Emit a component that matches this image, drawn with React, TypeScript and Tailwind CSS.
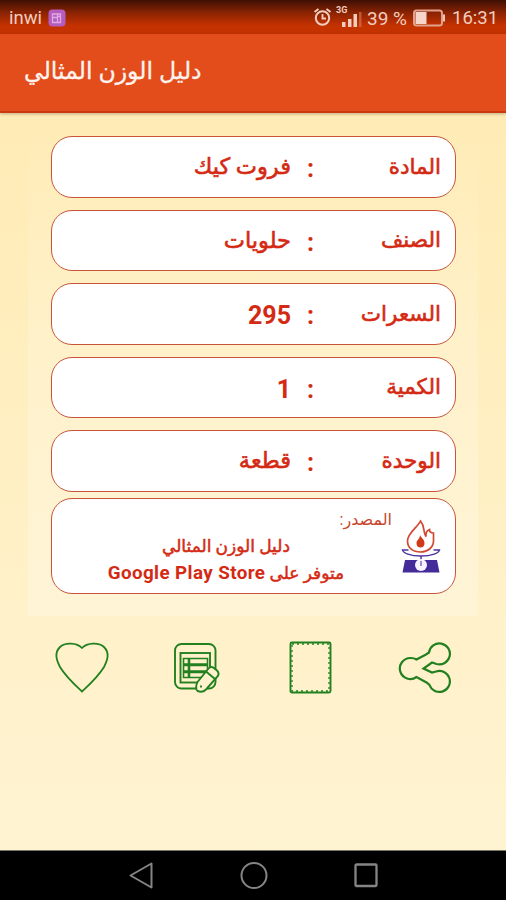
import type { ReactNode } from 'react'

type Row = { label: string; value: string; size: string }

const arabic = 'text-[22.5px] [-webkit-text-stroke:0.6px_#d42a14]'
const digits = 'text-[25px] pt-1 font-bold'

const rows: Row[] = [
  { label: 'المادة', value: 'فروت كيك', size: arabic },
  { label: 'الصنف', value: 'حلويات', size: arabic },
  { label: 'السعرات', value: '295', size: digits },
  { label: 'الكمية', value: '1', size: digits },
  { label: 'الوحدة', value: 'قطعة', size: arabic },
]

function StatusBar() {
  return (
    <div
      dir="ltr"
      className="flex h-[34px] items-center bg-linear-to-b from-[#3f1003] via-[#8f2402] via-40% to-[#c43200] to-75% pt-[3px] pr-[9px] pl-[9px] text-[18.5px] leading-none text-[#f3cdbf]"
    >
      <span className="w-[33px]">inwi</span>
      <svg width="18" height="18" viewBox="0 0 18 18" className="ml-[6px] -mt-0.5">
        <rect x="0.5" y="0.5" width="17" height="17" rx="4" fill="#b45cc0" />
        <path
          d="M4.5 5h8v8.500h-8zM4.500 8.500h5v5M9.500 5v2.500h3"
          fill="none"
          stroke="#e0a9df"
          strokeWidth="1.300"
        />
      </svg>
      <div className="flex-1" />
      <svg width="19" height="20" viewBox="0 0 19 20" fill="none" stroke="#f3cdbf" className="-mt-[3px]">
        <circle cx="9.500" cy="11" r="6.700" strokeWidth="2" />
        <path d="M9.500 7v4.500h3.500M1.500 5l4-3M17.500 5l-4-3" strokeWidth="1.900" />
      </svg>
      <div className="mr-[2px] ml-[4px] -mt-[2px] flex h-[24px] w-[29px] flex-col">
        <span className="h-[6px] text-[9px] leading-[8px] font-bold">3G</span>
        <svg width="29" height="17" viewBox="0 0 29 17" fill="#f3cdbf">
          <rect x="6" y="10" width="3.500" height="5" />
          <rect x="12" y="7" width="3.500" height="8" />
          <rect x="17.500" y="2" width="3.500" height="13" />
          <rect x="23" y="0" width="2.500" height="15" fill="#dd7a58" opacity="0.600" />
        </svg>
      </div>
      <span className="w-[42px] text-[19px] whitespace-nowrap">39 %</span>
      <svg width="34" height="18" viewBox="0 0 34 18" className="ml-[3px] -mt-px">
        <rect x="2" y="1.500" width="28" height="15" rx="2.500" fill="none" stroke="#dfa28c" strokeWidth="2" />
        <rect x="3.500" y="3" width="11" height="12" fill="#f6d5ca" />
        <rect x="31" y="5.500" width="2" height="7" fill="#f0c5b6" />
      </svg>
      <span className="ml-[6px] w-[45px] whitespace-nowrap">16:31</span>
    </div>
  )
}

function Card({ children, className }: { children: ReactNode; className: string }) {
  return (
    <div className={`flex rounded-[21px] border border-[#c8553a] bg-white text-[#d42a14] ${className}`}>
      {children}
    </div>
  )
}

function FlameScale() {
  return (
    <svg width="40" height="54" viewBox="0 0 40 54" fill="none">
      <path
        d="M19.500 2C17 8 6.500 14 6.500 22C6.500 29 12 33 19.500 33C27 33 32.500 28 32.500 22V14C30 14 28.500 12.500 28.500 10.500C26 11.500 24.500 13.500 25 17.500C21.500 12.500 24.500 8 19.500 2Z"
        stroke="#cf4a30"
        strokeWidth="1.700"
      />
      <path d="M19 16C20 19 23.500 20 23.500 24C23.500 27 22 28.500 19.500 28.500C17 28.500 15.500 27 15.500 24C15.500 21 19 20 19 16Z" fill="#d13a17" />
      <path d="M7.500 31H1.500C2 34 9 37 20 37S38 34 38.500 31H32.500M20 37v5" stroke="#4b35a0" strokeWidth="1.500" />
      <path d="M4 41h32l2.500 12.500h-37z" fill="#452b99" />
      <circle cx="20" cy="46" r="6" fill="#f7f3ff" />
      <path d="M20 42v5" stroke="#452b99" />
    </svg>
  )
}

function Actions() {
  return (
    <div dir="ltr" className="flex h-[54px] items-center justify-between pr-[54px] pl-[54px]">
      <svg width="56" height="54" viewBox="0 0 56 54" fill="none" stroke="#238021" strokeWidth="1.800">
        <path d="M28 8C23 2.500 11 2 6 7C0 13 2.500 20 6 27C12 37 21 45 28 51.500C35 45 44 37 50 27C53.500 20 56 13 50 7C45 2 33 2.500 28 8Z" />
      </svg>
      <svg width="48" height="54" viewBox="0 0 48 54" fill="none" stroke="#238021" strokeWidth="1.900" className="mr-[3px] -ml-[3px]">
        <rect x="3" y="4" width="40.500" height="44.500" rx="6.500" />
        <rect x="8.500" y="13" width="29.500" height="29.500" />
        <path
          d="M17.500 18.500h18v5.500h-18zM17.500 25.500h18v5.500h-18zM17.500 32.500h15v5h-15zM11.500 18.500h5v5.500h-5zM11.500 25.500h5v5.500h-5zM11.500 32.500h5v5h-5z"
          strokeWidth="1.600"
        />
        <path
          d="M25.500 42L36.500 28.500C38 26.500 40.500 26.500 42.500 28.500L45 30.500C47 32.500 47 34.500 45.500 36.500L34 49.500C31.500 52 28 52 25.500 51C23.500 50 24 44.500 25.500 42Z"
          fill="#fff2cc"
        />
        <path d="M34 31.500l9 7.500M29 45.500v2" />
      </svg>
      <svg width="44" height="54" viewBox="0 0 44 54" fill="none" stroke="#238021">
        <rect x="1.500" y="2.500" width="40" height="50" rx="1.500" strokeWidth="1.900" />
        <rect x="3" y="4" width="37" height="47" strokeWidth="1.300" strokeDasharray="2 3" />
      </svg>
      <svg width="54" height="54" viewBox="0 0 54 54" fill="none" stroke="#238021" strokeWidth="2.200">
        <path d="M18.500 19.500L28 14.500L31 12.500A10.500 10.500 0 1 1 38.500 24L34 22.500L25.500 28.500L34 32.500L38 31.500A10.500 10.500 0 1 1 31.500 45L28.500 42.500L18.500 37A10.500 10.500 0 1 1 12.500 18A10.500 10.500 0 0 1 18.500 19.500Z" />
      </svg>
    </div>
  )
}

function NavBar() {
  return (
    <div dir="ltr" className="flex h-[50px] items-center justify-between border-t border-[#77766b] bg-black pr-[127px] pl-[128px]">
      <svg width="27" height="28" viewBox="0 0 27 28" fill="none" stroke="#858585" strokeWidth="2">
        <path d="M2.500 13.500L23.500 1.500V25.500Z" strokeLinejoin="round" />
      </svg>
      <svg width="28" height="28" viewBox="0 0 28 28" fill="none" stroke="#858585" strokeWidth="2">
        <circle cx="14" cy="13.500" r="12.500" />
      </svg>
      <svg width="26" height="28" viewBox="0 0 26 28" fill="none" stroke="#858585" strokeWidth="2.300">
        <rect x="2.500" y="2.500" width="21" height="21.500" rx="1" />
      </svg>
    </div>
  )
}

export default function App() {
  return (
    <div
      dir="rtl"
      className="flex h-[900px] w-[506px] flex-col overflow-hidden bg-linear-to-b from-[#ffeab0] to-[#fff4d4] font-['Roboto','DejaVu_Sans',sans-serif]"
    >
      <StatusBar />
      <header dir="ltr" className="flex h-[79px] items-center border-b-2 border-[#cb3a0d] bg-[#e34c1b] pb-0.5 pl-6 shadow-[0_1px_3px_#0004]">
        <h1 dir="rtl" className="text-[23.6px] leading-none whitespace-nowrap text-[#fff3ee] [-webkit-text-stroke:0.3px_#fff3ee]">
          دليل الوزن المثالي
        </h1>
      </header>
      <main className="mx-[28px] flex h-[503px] flex-col bg-linear-to-b from-transparent to-[#fff4d6] pt-[23px] pr-[22px] pl-[23px]">
        <div className="flex flex-col gap-[12px]">
          {rows.map((row) => (
            <Card key={row.label} className="h-[61.6px] items-center pr-[14px]">
              <span className="w-[125px] text-[21.5px] whitespace-nowrap [-webkit-text-stroke:0.6px_#d42a14]">{row.label}</span>
              <span className="w-[25px] pt-1 pr-0.5 text-[25px] font-bold">:</span>
              <span className={`whitespace-nowrap ${row.size}`}>{row.value}</span>
            </Card>
          ))}
        </div>
        <Card className="mt-[6px] h-[96px] pr-[14px]">
          <div className="pt-[20px]">
            <FlameScale />
          </div>
          <div className="flex w-[295px] flex-col pr-[9px]">
            <span className="h-[34px] pt-[10px] text-[16px] leading-[22px] text-[#c9452c]">المصدر:</span>
            <div className="flex w-[240px] flex-col items-center self-end text-[17px] leading-[27px] whitespace-nowrap [-webkit-text-stroke:0.5px_#d42a14]">
              <span>دليل الوزن المثالي</span>
              <span>
                متوفر على{' '}
                <span className="text-[18.8px] font-bold tracking-[0.4px] [-webkit-text-stroke:0]">Google Play Store</span>
              </span>
            </div>
          </div>
        </Card>
      </main>
      <div className="h-[24px]" />
      <Actions />
      <div className="flex-1" />
      <NavBar />
    </div>
  )
}
